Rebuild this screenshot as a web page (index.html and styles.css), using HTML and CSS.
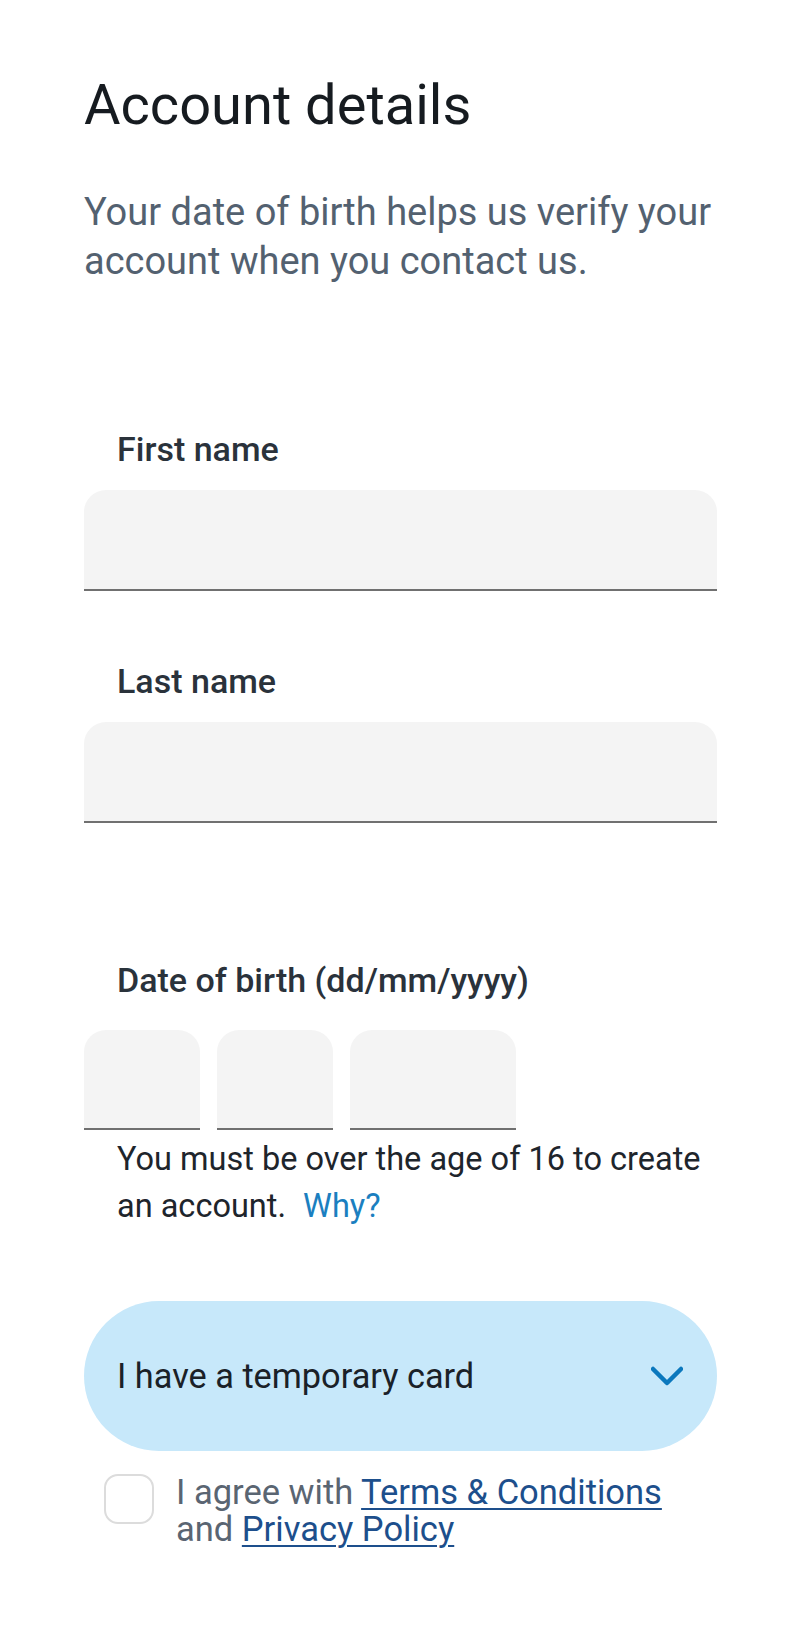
FILE: index.html
```html
<!DOCTYPE html>
<html lang="en">
<head>
  <meta charset="UTF-8">
  <meta name="viewport" content="width=device-width, initial-scale=1.0">
  <title>Account details</title>
  <link rel="stylesheet" href="styles.css">
</head>
<body>
  <div class="page">
    <h1 class="title">Account details</h1>
    <p class="intro">Your date of birth helps us verify your account when you contact us.</p>

    <label class="label label-first">First name</label>
    <div class="field"></div>

    <label class="label label-last">Last name</label>
    <div class="field"></div>

    <label class="label label-dob">Date of birth (dd/mm/yyyy)</label>
    <div class="dob">
      <div class="field field-day"></div>
      <div class="field field-month"></div>
      <div class="field field-year"></div>
    </div>
    <p class="helper">You must be over the age of 16 to create an account. <a class="why" href="#">Why?</a></p>

    <div class="toggle">
      <span>I have a temporary card</span>
      <svg class="chevron" width="32" height="20" viewBox="0 0 32 20">
        <path d="M2 3 L16 17 L30 3" fill="none" stroke="#0b78bd" stroke-width="4.5" stroke-linecap="round" stroke-linejoin="round"/>
      </svg>
    </div>

    <div class="agree">
      <div class="checkbox"></div>
      <p class="agree-text">I agree with <a class="link" href="#">Terms &amp; Conditions</a> and <a class="link" href="#">Privacy Policy</a></p>
    </div>
  </div>
</body>
</html>
```

FILE: styles.css
```css
body {
  margin: 0;
  background: #ffffff;
  font-family: Roboto, "Noto Sans", sans-serif;
}
.page {
  padding: 0 83px 80px 84px;
}
.title {
  margin: 77px 0 0 0;
  font-size: 56px;
  line-height: 56px;
  font-weight: 400;
  color: #161b20;
}
.intro {
  margin: 55px 0 0 0;
  font-size: 38px;
  line-height: 49px;
  color: #536170;
}
.label {
  display: block;
  margin-left: 33px;
  font-size: 34px;
  line-height: 34px;
  font-weight: 500;
  color: #2a323b;
}
.label-first {
  margin-top: 146px;
}
.label-last {
  margin-top: 73px;
}
.label-dob {
  margin-top: 140px;
}
.field {
  margin-top: 24px;
  height: 99px;
  background: #f4f4f4;
  border-bottom: 2px solid #707070;
  border-radius: 22px 22px 0 0;
}
.dob {
  display: flex;
  gap: 17px;
  margin-top: 33px;
}
.dob .field {
  margin-top: 0;
  height: 98px;
}
.field-day,
.field-month {
  width: 116px;
}
.field-year {
  width: 166px;
}
.helper {
  margin: 6px 0 0 33px;
  font-size: 32.5px;
  line-height: 47px;
  color: #1e252c;
}
.why {
  margin-left: 9px;
  color: #1b7fc0;
  text-decoration: none;
}
.toggle {
  display: flex;
  align-items: center;
  justify-content: space-between;
  margin-top: 71px;
  height: 150px;
  padding: 0 34px 0 33px;
  background: #c7e8fa;
  border-radius: 75px;
  font-size: 34.3px;
  line-height: 34px;
  color: #1a2128;
}
.chevron {
  display: block;
}
.agree {
  display: flex;
  align-items: flex-start;
  gap: 22px;
  margin: 23px 0 0 20px;
}
.checkbox {
  flex: none;
  width: 46px;
  height: 46px;
  border: 2px solid #dcdcdc;
  border-radius: 14px;
}
.agree-text {
  max-width: 500px;
  margin: 0;
  font-size: 34.5px;
  line-height: 37px;
  color: #5a6572;
}
.link {
  color: #1d4f8c;
  text-decoration: underline;
  text-decoration-thickness: 2px;
  text-underline-offset: 4px;
}
```
